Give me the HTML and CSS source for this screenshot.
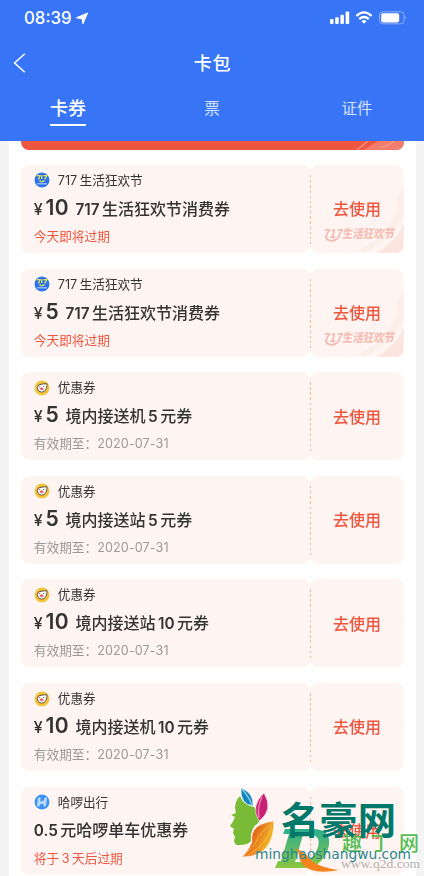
FILE: index.html
```html
<!DOCTYPE html>
<html lang="zh-CN">
<head>
<meta charset="utf-8">
<title>卡包</title>
<link rel="stylesheet" href="styles.css">
</head>
<body>
<svg class="defs" width="0" height="0">
  <defs>
    <symbol id="fest" viewBox="0 0 16 16">
      <circle cx="8" cy="8" r="8" fill="#fff"/><circle cx="8" cy="8" r="7.5" fill="#2f70ef"/>
      <path d="M3 3.6h3L4.5 7.4M7.7 3.2v3.9M9.2 3.6h3.6L10.8 7.4M5.4 8.6q2.6 2.2 5.2 0" fill="none" stroke="#d9e84a" stroke-width="1.3"/>
      <path d="M3.5 11.8h9" stroke="#b9d2ff" stroke-width="1.6" stroke-dasharray="1.4 .5"/>
    </symbol>
    <symbol id="pig" viewBox="0 0 16 16">
      <circle cx="8" cy="8" r="8" fill="#fff"/><circle cx="8" cy="8" r="7.5" fill="#f5c23c"/>
      <path d="M3.3 7.5Q3.6 4.8 6 4.5Q9 3.8 12.9 3.7Q13.3 6 12.2 8.8Q10.7 12.3 7.3 12.2Q3.3 11.4 3.3 7.5Z" fill="#fff" stroke="#4c4335" stroke-width=".9"/>
      <ellipse cx="7.7" cy="8.7" rx="1.8" ry="1.3" fill="#ef5963"/>
      <path d="M5.2 6.8h1M9.3 6.5h1" stroke="#444" stroke-width=".9"/>
    </symbol>
    <symbol id="hello" viewBox="0 0 16 16">
      <circle cx="8" cy="8" r="8" fill="#fff"/><circle cx="8" cy="8" r="7.5" fill="#3e90f3"/>
      <path d="M5.4 3.6L4.2 12.4M11.8 3.6L10.6 12.4M5 8.7Q8 9.5 11 7" fill="none" stroke="#b9dcff" stroke-width="2.6"/>
    </symbol>
    <symbol id="swirl" viewBox="0 0 94 88">
      <path d="M94 20Q87 27 86 43Q81 68 52 84L48 88H94Z" fill="#fdeee9"/>
      <path d="M94 59Q85 75 65 88H94Z" fill="#fae5df"/>
      <path d="M94 50Q84 74 54 87L67 88Q86 76 94 58Z" fill="#fff5f2"/>
      <path d="M16 73Q21 79 28 73" fill="none" stroke="#f5bcb4" stroke-width="2"/>
      <g transform="translate(13 73) skewX(-10)"><text class="mark" textLength="71" lengthAdjust="spacingAndGlyphs">717生活狂欢节</text></g>
    </symbol>
  </defs>
</svg>
<div class="phone">
  <header class="header">
    <div class="status">
      <span class="time">08:39</span>
      <svg class="loc" width="13" height="13" viewBox="0 0 13 13"><path d="M11.6 1L6.9 11.8L6.1 6.8L.5 5.8Z" fill="#fff" stroke="#fff" stroke-width="1" stroke-linejoin="round"/></svg>
      <svg class="sys" width="78" height="16" viewBox="0 0 78 16">
        <g fill="#fff"><rect x="0" y="9" width="3.5" height="5" rx="1"/><rect x="5.2" y="7.2" width="3.5" height="6.8" rx="1"/><rect x="10.4" y="4.8" width="3.5" height="9.2" rx="1"/><rect x="15.6" y="1.6" width="3.6" height="12.4" rx="1"/></g>
        <g fill="none" stroke="#fff" stroke-width="2.3"><path d="M26.4 6Q34 -1.2 41.6 6M29.2 9.1Q34 4.8 38.8 9.1"/></g>
        <path d="M31.5 11.2Q34 9 36.5 11.2L34 13.8Z" fill="#fff"/>
        <rect x="49.5" y="1.8" width="24.5" height="12" rx="3.3" fill="none" stroke="#8eb0fa"/>
        <rect x="51.2" y="3.2" width="18" height="9.2" rx="1.8" fill="#fff"/>
        <path d="M75.4 6Q77 8 75.4 10Z" fill="#8eb0fa"/>
      </svg>
    </div>
    <div class="nav">
      <svg class="back" width="14" height="22" viewBox="0 0 14 22"><path d="M12.8 1.8L2.6 11L12.8 20.2" fill="none" stroke="#fff" stroke-width="1.5"/></svg>
      <h1>卡包</h1>
    </div>
    <nav class="tabs">
      <span class="tab on">卡券</span><span class="tab">票</span><span class="tab">证件</span>
    </nav>
  </header>
  <main class="sheet">
    <div class="strip"><svg width="60" height="10" viewBox="0 0 60 10"><path d="M34 0H60V10H18Z" fill="#f27d6d"/><path d="M13 9Q18 5 24 0M36 6Q43 6 50 0" fill="none" stroke="#f39a8c" stroke-width="1.3"/></svg></div>

    <section class="card">
      <div class="info">
        <div class="brand"><svg><use href="#fest"/></svg><span><i>717</i>生活狂欢节</span></div>
        <div class="title"><span class="yen">¥</span><b>10</b><span><i>717</i>生活狂欢节消费券</span></div>
        <div class="foot hot">今天即将过期</div>
      </div>
      <div class="act"><svg class="swirl"><use href="#swirl"/></svg><span>去使用</span></div>
    </section>

    <section class="card">
      <div class="info">
        <div class="brand"><svg><use href="#fest"/></svg><span><i>717</i>生活狂欢节</span></div>
        <div class="title"><span class="yen">¥</span><b>5</b><span><i>717</i>生活狂欢节消费券</span></div>
        <div class="foot hot">今天即将过期</div>
      </div>
      <div class="act"><svg class="swirl"><use href="#swirl"/></svg><span>去使用</span></div>
    </section>

    <section class="card">
      <div class="info">
        <div class="brand"><svg><use href="#pig"/></svg><span>优惠券</span></div>
        <div class="title"><span class="yen">¥</span><b>5</b><span>境内接送机<i class="mid">5</i>元券</span></div>
        <div class="foot">有效期至：<em>2020-07-31</em></div>
      </div>
      <div class="act"><span>去使用</span></div>
    </section>

    <section class="card">
      <div class="info">
        <div class="brand"><svg><use href="#pig"/></svg><span>优惠券</span></div>
        <div class="title"><span class="yen">¥</span><b>5</b><span>境内接送站<i class="mid">5</i>元券</span></div>
        <div class="foot">有效期至：<em>2020-07-31</em></div>
      </div>
      <div class="act"><span>去使用</span></div>
    </section>

    <section class="card">
      <div class="info">
        <div class="brand"><svg><use href="#pig"/></svg><span>优惠券</span></div>
        <div class="title"><span class="yen">¥</span><b>10</b><span>境内接送站<i class="mid">10</i>元券</span></div>
        <div class="foot">有效期至：<em>2020-07-31</em></div>
      </div>
      <div class="act"><span>去使用</span></div>
    </section>

    <section class="card">
      <div class="info">
        <div class="brand"><svg><use href="#pig"/></svg><span>优惠券</span></div>
        <div class="title"><span class="yen">¥</span><b>10</b><span>境内接送机<i class="mid">10</i>元券</span></div>
        <div class="foot">有效期至：<em>2020-07-31</em></div>
      </div>
      <div class="act"><span>去使用</span></div>
    </section>

    <section class="card">
      <div class="info">
        <div class="brand"><svg><use href="#hello"/></svg><span>哈啰出行</span></div>
        <div class="title"><span><i>0.5</i>元哈啰单车优惠券</span></div>
        <div class="foot hot">将于<i class="mid">3</i>天后过期</div>
      </div>
      <div class="act"><span>去使用</span></div>
    </section>
  </main>

  <svg class="stamp" width="204" height="96" viewBox="0 0 204 96">
    <defs>
      <linearGradient id="leaf" x1="0" y1="0" x2="1" y2=".5"><stop offset="0" stop-color="#f6a52c"/><stop offset=".45" stop-color="#e5681a"/><stop offset="1" stop-color="#f2c52c"/></linearGradient>
      <linearGradient id="dee" x1="0" y1="0" x2="0" y2="1"><stop offset="0" stop-color="#2bae91"/><stop offset="1" stop-color="#8cc63f"/></linearGradient>
    </defs>
    <path fill-rule="evenodd" d="M65 49H92Q111 49 109 65Q106 81 91 88H55L58 81H61L69 54H63ZM83 55L75 82H81Q93 81 98 67Q101 55 90 55Z" fill="url(#dee)"/>
    <path d="M74 68Q84 71 90 79Q97 87 119 90Q93 95 83 85Q79 79 79 75Q78 70 74 68Z" fill="#f5841f"/>
    <path d="M20 16Q23 25 34 27L39 36Q41 41 37 44Q30 49 31 61Q28 65 20 65Q15 66 14 61L15 57L13 53L14 49L10 46Q14 41 15 37L11 35L16 33Q13 23 20 16Z" fill="#79bb36"/>
    <path d="M21 8Q34 13 33 26Q20 24 21 8Z" fill="#1683bd" stroke="#fff" stroke-width=".6"/><path d="M22 9Q29 17 32 25" fill="none" stroke="#83d5ec" stroke-width="1.2"/>
    <path d="M44 13Q54 30 39 41Q30 26 44 13Z" fill="#ca2073" stroke="#fff" stroke-width=".6"/><path d="M42 17Q37 27 39 38" fill="none" stroke="#ee83b3" stroke-width="1.4"/>
    <path d="M54 41Q29 44 32 62Q29 70 22 77Q54 77 54 41Z" fill="url(#leaf)" stroke="#fff" stroke-width=".6"/><path d="M53 43Q39 52 35 64L24 76M52 46Q47 64 27 76" fill="none" stroke="#ffc044" stroke-width=".8"/>
    <text class="qu" x="122" y="71" textLength="77">趣丁网</text>
    <text class="ming" x="61" y="54" textLength="115" lengthAdjust="spacingAndGlyphs">名豪网</text>
    <text class="qurl" x="121" y="88" textLength="79" lengthAdjust="spacingAndGlyphs">www.q2d.com</text>
    <text class="murl" x="35" y="79" textLength="156" lengthAdjust="spacingAndGlyphs">minghaoshangwu.com</text>
  </svg>
</div>
</body>
</html>
```
FILE: styles.css
```css
* { box-sizing: border-box; }
html, body { margin: 0; overflow: hidden; }
body { font-family: Inter, "Noto Sans CJK SC", sans-serif; color: #333; }
i, em { font-style: normal; }
.defs { position: absolute; }
.phone { position: relative; width: 424px; height: 876px; overflow: hidden; background: #f4f4f4; }

.header { height: 140.5px; background: #3875f6; color: #fff; }
.status { display: flex; align-items: center; height: 36px; padding: 0 16px 0 24px; }
.time { font-size: 16.8px; font-weight: 500; line-height: 36px; width: 52px; }
.sys { margin-left: auto; }
.nav { display: flex; align-items: center; height: 54px; padding: 0 12px; }
.nav h1 { flex: 1; margin: 0 13px 2px 0; text-align: center; font-size: 18px; font-weight: 500; letter-spacing: .7px; }
.tabs { display: grid; grid-template-columns: 136px 1fr 136px; justify-items: center; height: 37px; }
.tab { height: 36px; line-height: 37px; font-size: 15.5px; color: #d4e1fd; }
.tab:last-child { padding-left: 2px; }
.tab.on { font-size: 18px; font-weight: 500; color: #fff; border-bottom: 2px solid #fff; border-radius: 1px; }

.sheet { display: flex; flex-direction: column; gap: 15.4px; width: 407.5px; height: 736px; margin-left: 8.5px; padding: 0 12.3px; background: #fff; }
.strip { flex: none; display: flex; justify-content: flex-end; height: 9px; background: #ef5640; border-radius: 0 0 8px 8px; overflow: hidden; }
.card { flex: none; display: flex; height: 88.25px; }
.info, .act { background: #fef5f2; }
.info { width: 289.5px; padding: 6px 0 0 13px; border-radius: 8px 0 0 8px;
  -webkit-mask: radial-gradient(circle at 100% 0, #0000 4px, #000 4.5px) top / 100% 51% no-repeat, radial-gradient(circle at 100% 100%, #0000 4px, #000 4.5px) bottom / 100% 51% no-repeat; }
.act { position: relative; flex: 1; display: flex; align-items: center; justify-content: center; padding-bottom: 1.5px; border-radius: 0 8px 8px 0; overflow: hidden; color: #ef5640; font-size: 16px; font-weight: 500;
  -webkit-mask: radial-gradient(circle at 0 0, #0000 4px, #000 4.5px) top / 100% 51% no-repeat, radial-gradient(circle at 0 100%, #0000 4px, #000 4.5px) bottom / 100% 51% no-repeat; }
.act::before { content: ""; position: absolute; left: 0; top: 10px; width: 1px; height: 69px; background: repeating-linear-gradient(#f6b99e 0 2.5px, transparent 2.5px 5.15px); }
.act > span { position: relative; }
.swirl { position: absolute; left: 0; top: 0; width: 94px; height: 88px; }
.mark { font: 900 12px "Noto Sans CJK SC", sans-serif; fill: #f5bcb4; }

.brand { display: flex; align-items: center; gap: 7.5px; height: 19px; font-size: 12.6px; line-height: 19px; }
.brand svg { width: 16px; height: 16px; margin-left: .5px; }
.brand i { margin-right: 2.5px; }
.title { display: flex; align-items: baseline; height: 37px; line-height: 36px; font-size: 16px; font-weight: 500; white-space: nowrap; }
.title i { margin-right: 2.5px; font-weight: 600; font-size: 15.3px; }
.title .mid { margin-left: 2.5px; }
.title b { font-size: 21px; font-weight: 600; margin: 0 6.3px 0 2px; line-height: 36px; letter-spacing: .4px; }
.yen { width: 9.8px; font-size: 16px; font-weight: 500; }
.foot { height: 20px; line-height: 20px; font-size: 12.7px; color: #999; }
.foot em { font-size: 12.6px; letter-spacing: .1px; }
.hot { color: #ef5640; }
.foot .mid { margin: 0 2.5px; }

.stamp { position: absolute; left: 220px; top: 780px; }
.ming { font: 700 38px "Noto Sans CJK SC", sans-serif; fill: #00796b; }
.murl { font: 400 14px "DejaVu Sans", sans-serif; fill: #2b8790; }
.qu { font: 500 20px "Noto Sans CJK SC", sans-serif; fill: #58bd55; }
.qurl { font: 400 13px "Liberation Serif", serif; fill: #b1b1b1; }
```
